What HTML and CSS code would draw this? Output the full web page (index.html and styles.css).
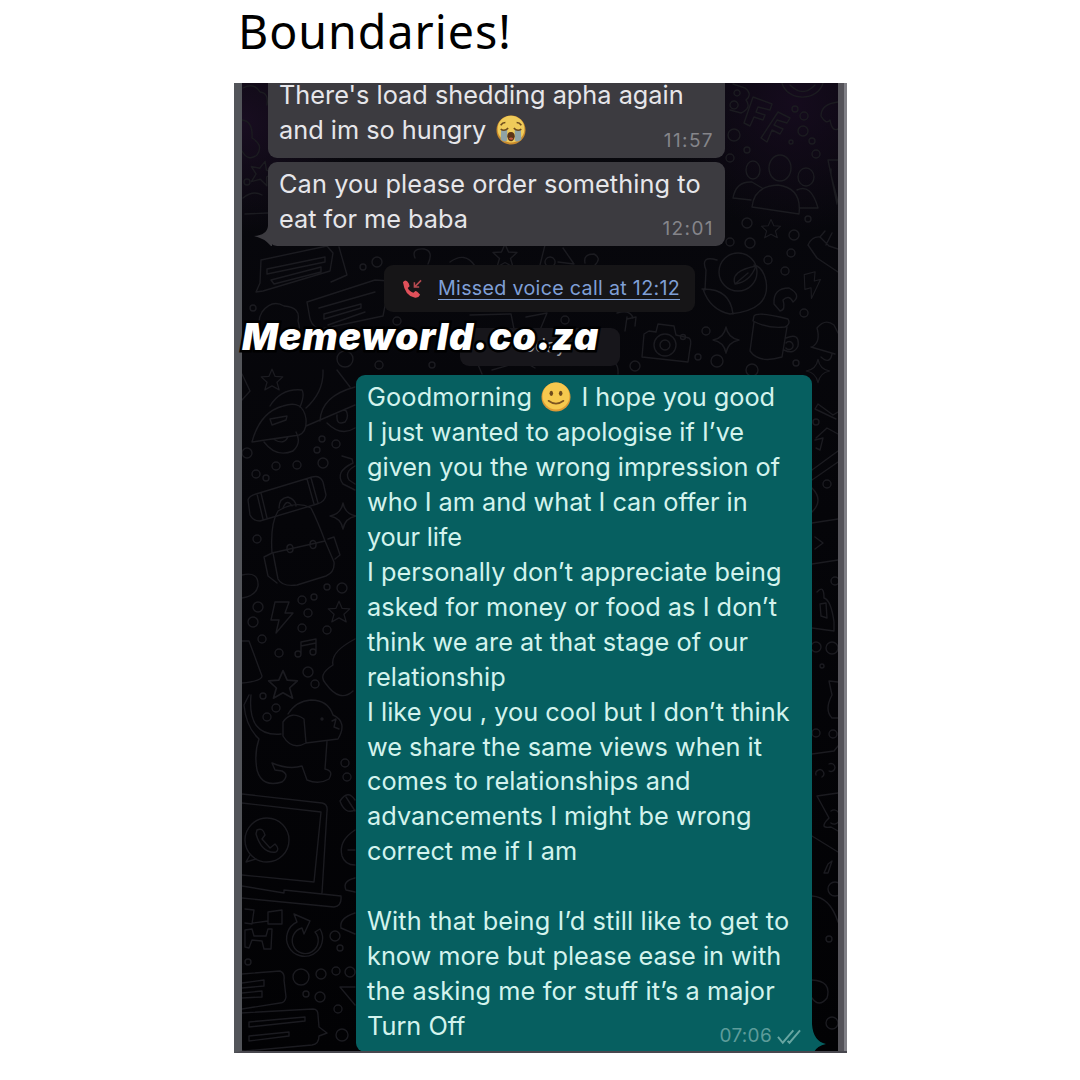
FILE: index.html
```html
<!DOCTYPE html>
<html lang="en">
<head>
<meta charset="utf-8">
<title>Boundaries!</title>
<link rel="stylesheet" href="styles.css">
</head>
<body>
<h1 class="title">Boundaries!</h1>
<main class="photo">
  <svg class="wallpaper" viewBox="234 83 613 970" aria-hidden="true">
    <defs>
      <path id="star" d="M0-12 3.500-4 12-3.500 5.500 2.500 8 11 0 6.500-8 11-5.500 2.500-12-3.500-3.500-4Z"/>
      <path id="spark" d="M0-13Q2-2 13 0Q2 2 0 13Q-2 2-13 0Q-2-2 0-13Z"/>
      <path id="bolt" d="M-6-15H8L4-4H12L-5 16-2 3H-10Z"/>
      <path id="note" d="M-5 7V-5L10-8V5M-5-1 10-4M-5 7A3 3 0 1 1-8 4Q-5 4-5 7M10 5A3 3 0 1 1 7 2Q10 2 10 5"/>
      <path id="chat" d="M-38-16 34-20Q39-20 39-14L40-2 48 4 40 7Q40 15 33 16L-34 22Q-40 22-40 15L-42-10Q-42-16-38-16ZM-30-7 26-12V-8L-30-2ZM-30 7 10 3V7L-30 12Z"/>
    </defs>
    <g class="doodle">
      <!-- right of the grey bubbles -->
      <path d="M733 84 745 88Q753 94 746 100 752 108 741 113L730 110M737 90a3 3 0 1 0 .1 0M734 101a4 4 0 1 0 .1 0M753 97 772 104 770 110 758 107 756 112 765 115 763 120 754 117 750 126 744 123ZM778 112 790 118 787 123 777 120 774 125 783 129 780 134 772 130 767 142 761 138Z"/>
      <path d="M782 83A21 18 0 0 0 823 83M790 85Q803 98 815 85M838 102Q821 104 821 116 826 125 830 120 832 132 838 129"/>
      <ellipse cx="780" cy="168" rx="11" ry="13"/><ellipse cx="753" cy="170" rx="7" ry="9"/><ellipse cx="806" cy="177" rx="8" ry="9"/>
      <path d="M752 207Q754 186 778 185 802 188 799 214ZM733 198Q736 181 752 182L762 188M733 198 751 200M797 190Q811 183 818 208L800 208"/>
      <path d="M838 160H828L837 204M831 169V175L838 202"/>
      <use href="#star" transform="translate(771 229) scale(.8)"/>
      <path d="M808 245Q812 236 820 237L829 246 838 249M808 245 817 258 838 272M820 237 825 231M826 245 832 233"/>
      <circle cx="738" cy="272" r="19"/>
      <path d="M717 260Q700 255 706 270L705 290M703 289Q710 310 730 314 771 310 766 281 763 267 754 265M702 289Q730 288 733 314M735 284Q730 271 756 266 750 282 735 284L748 273"/>
      <path d="M774 304Q773 288 789 288 802 295 793 302 789 294 783 300 786 310 780 311Z"/>
      <use href="#bolt" transform="translate(812 285) rotate(-15) scale(.8)"/>
      <path d="M754 316Q757 311 788 319 791 324 785 327 768 329 753 321ZM754 322 750 351Q759 364 782 357L787 327M786 338Q800 332 798 346 794 355 784 350M786 343a4 4 0 1 1-.1 5"/>
      <path d="M812 347Q821 342 817 328 825 318 834 325L838 333M811 347 835 354M821 357Q830 365 832 354"/>
      <path d="M649 331 656 332 658 324 674 326 676 335 689 338Q692 340 690 348L688 362 642 357 644 334Z"/>
      <circle cx="665" cy="345" r="11"/><circle cx="665" cy="345" r="5"/><circle cx="683" cy="337" r="2.500"/>
      <use href="#spark" transform="translate(726 340)"/><use href="#spark" transform="translate(818 371) scale(.9)"/>
      <!-- right edge -->
      <path d="M838 412 833 415 818 404 815 409 836 419M815 440 823 438 820 450 816 448M816 438 827 428 838 434M812 480 838 462M812 470 838 451M812 523 838 519M815 537 823 543 815 549M812 564 838 560M817 592Q824 584 824 598 831 600 834 622V631L812 628M820 604 826 603 827 618 821 616ZM812 488Q824 500 812 512M838 682 829 681 832 695Q824 710 832 718H838M812 754 834 751 838 746M816 775a4 4 0 1 1 6 2M829 764a4 4 0 1 1 .1 7M838 793 817 796 829 818Q818 829 831 827L838 831M831 811a6 7 0 1 1-.1 12M812 836 838 852M828 864 832 861 828 873 824 873ZM812 896Q830 897 838 922M812 980Q832 981 827 998 819 1008 812 998"/>
      <!-- upper left and behind the call notice -->
      <path d="M243 88Q254 82 260 92 269 93 267 105M242 120Q253 121 252 138 264 145 257 155 248 162 242 151M245 214 268 213M243 198Q253 190 262 195"/>
      <use href="#star" transform="translate(262 173) rotate(15)"/>
      <path d="M261 260 327 246 333 253 330 271 263 291 256 292 260 283ZM267 269 325 257V262L267 274ZM271 280 321 267V272L274 284ZM339 247 347 275 331 282"/>
      <path d="M307 302 375 280 390 281 383 316 326 328Q314 331 310 319ZM319 308 375 292M324 314 361 304V308L324 319ZM328 325 365 312"/>
      <path d="M262 312Q272 299 284 306 301 307 298 321 303 336 291 343L267 340Q254 325 262 312Z"/>
      <path d="M415 258Q411 248 424 249 434 251 428 264M450 262Q465 251 475 266M545 245 540 265M563 248 574 264 558 262M550 257a5 5 0 1 0 .1 0M585 263Q583 254 594 254 602 258 595 265"/>
      <use href="#star" transform="translate(505 256)"/>
      <path d="M470 315 511 314 514 329M526 317 547 313 540 330M627 317 625 331M627 319 636 317 635 326M476 360 482 374M497 347 535 368M492 370 527 360M605 365Q619 358 618 374M617 313Q630 309 633 318"/>
      <!-- left column -->
      <use href="#star" transform="translate(272 380) scale(.9)"/>
      <path d="M242 374 250 391 242 400M252 442Q260 412 283 406 303 399 306 419 307 432 299 435 280 438 252 442ZM270 406Q281 388 302 390 305 395 300 407M270 419 287 416 286 420 272 425ZM264 442Q276 458 293 451 302 443 296 432M275 440Q284 445 288 437M306 426 355 405M320 421Q321 396 355 387M327 423Q341 437 355 428M337 415Q336 426 345 422 350 416 345 409M323 370Q324 392 306 408M337 370 350 387"/>
      <path d="M342 456 352 459 353 463Q334 472 343 484L355 490M355 466Q344 472 349 480L355 484"/>
      <path d="M248 500Q249 496 256 494L312 477Q320 475 323 482L326 495Q325 502 317 504L260 521Q253 521 250 515ZM257 494 263 519M261 493 267 518M307 479 314 504M311 478 318 503M279 508Q279 498 288 497 296 500 296 506M283 508Q287 498 292 506"/>
      <path d="M272 553Q270 524 278 511 296 500 311 508 318 522 325 541Q299 547 272 553ZM273 553 278 579Q282 587 297 585L326 576Q335 572 334 562L325 541M272 553 264 557 268 576 277 583M328 539 334 537 340 555 335 559M287 549a3 4 0 1 0 6-1a3 4 0 1 0-6 1M310 545a3 4 0 1 0 6-1a3 4 0 1 0-6 1"/>
      <use href="#spark" transform="translate(343 516)"/>
      <path d="M242 575Q259 571 258 586 256 596 242 598"/>
      <use href="#bolt" transform="translate(281 617)"/><use href="#star" transform="translate(339 612) scale(.9)"/><use href="#note" transform="translate(306 647)"/>
      <path d="M242 641H249L262 676Q262 681 242 683M355 639Q330 652 333 665 317 675 326 684 340 703 353 691"/>
      <use href="#star" transform="translate(283 685) scale(1.200)"/>
      <path d="M251 695Q247 737 281 734M249 695 244 705Q246 727 259 739 254 753 257 770 262 788 282 782 290 775 282 771L275 770 272 763Q289 770 302 766L307 780Q319 785 329 779 334 771 325 769L327 741M288 714Q296 701 311 700 328 700 333 715 348 722 338 739L306 743M283 722Q291 710 304 719L306 743Q292 751 283 736Z"/>
      <circle cx="322" cy="719" r="1"/><path d="M332 721 336 719 334 727 339 729"/>
      <path d="M242 794 322 803Q328 804 327 811L322 893M242 803 321 812 314 882 242 875M242 886 284 893V890L341 896Q342 906 334 907L242 898"/>
      <circle cx="267" cy="840" r="22"/><path d="M250 855 246 862 256 859M257 830Q263 827 265 835L262 839 270 848 275 844Q280 849 276 852 262 854 256 834Z"/>
      <path d="M340 801Q348 789 355 800M340 801Q345 815 355 810M346 797 355 811M355 830Q338 841 342 856 345 865 355 865M348 850H355M355 878Q342 881 346 890L355 892M355 913Q339 918 341 928L355 934"/>
      <path d="M245 909 254 910 252 924 245 923M268 912 282 910 282 924 268 924ZM253 923 268 921M245 930 252 929 254 936H266L268 929 272 929 271 949 264 949 262 941 252 940 249 948 245 947Z"/>
      <path d="M320 929A18 18 0 1 1 297 922L294 914 310 921 304 934 302 928A13 13 0 1 0 315 932Z"/>
      <path d="M242 974 280 971Q285 973 284 980L286 997Q285 1003 280 1003L242 1009M242 983 264 980V986L242 988M242 993 262 991V997L242 998M340 987 355 1005M340 987H355"/>
      <use href="#chat" transform="translate(279 1029)"/>
      <g>
        <circle cx="734" cy="135" r="6"/><circle cx="803" cy="131" r="5"/><circle cx="804" cy="116" r="4"/><circle cx="795" cy="109" r="3"/><circle cx="812" cy="141" r="3"/><circle cx="816" cy="154" r="4"/><circle cx="791" cy="142" r="2"/><circle cx="747" cy="150" r="3"/><circle cx="730" cy="158" r="4"/><circle cx="747" cy="223" r="5"/><circle cx="794" cy="235" r="5"/><circle cx="808" cy="219" r="3"/><circle cx="750" cy="243" r="5"/><circle cx="730" cy="242" r="4"/><circle cx="791" cy="253" r="4"/><circle cx="768" cy="260" r="4"/><circle cx="785" cy="271" r="4"/><circle cx="804" cy="313" r="4"/><circle cx="706" cy="331" r="4"/><circle cx="698" cy="357" r="3"/><circle cx="717" cy="361" r="6"/><circle cx="635" cy="366" r="5"/><circle cx="752" cy="370" r="6"/><circle cx="796" cy="363" r="3"/><circle cx="565" cy="320" r="4"/>
        <circle cx="247" cy="182" r="3"/><circle cx="377" cy="262" r="5"/><circle cx="363" cy="267" r="3"/><circle cx="253" cy="308" r="3"/><circle cx="397" cy="321" r="4"/><circle cx="345" cy="359" r="8"/><circle cx="379" cy="365" r="4"/><circle cx="432" cy="365" r="3"/>
        <circle cx="322" cy="439" r="3"/><circle cx="336" cy="444" r="4"/><circle cx="317" cy="450" r="3"/><circle cx="247" cy="453" r="5"/><circle cx="276" cy="466" r="4"/><circle cx="297" cy="465" r="4"/><circle cx="323" cy="463" r="5"/><circle cx="256" cy="474" r="4"/><circle cx="266" cy="478" r="3"/><circle cx="257" cy="539" r="4"/><circle cx="342" cy="588" r="5"/><circle cx="327" cy="587" r="3"/><circle cx="314" cy="597" r="3"/><circle cx="302" cy="600" r="4"/><circle cx="258" cy="607" r="5"/><circle cx="253" cy="622" r="5"/><circle cx="308" cy="613" r="4"/><circle cx="302" cy="628" r="4"/><circle cx="327" cy="630" r="4"/><circle cx="262" cy="639" r="4"/><circle cx="279" cy="653" r="4"/><circle cx="308" cy="672" r="5"/><circle cx="315" cy="684" r="4"/><circle cx="263" cy="696" r="3"/><circle cx="276" cy="708" r="4"/><circle cx="267" cy="717" r="4"/><circle cx="345" cy="763" r="4"/><circle cx="347" cy="777" r="4"/>
        <circle cx="335" cy="936" r="5"/><circle cx="340" cy="948" r="3"/><circle cx="248" cy="962" r="3"/><circle cx="301" cy="977" r="8"/><circle cx="321" cy="974" r="5"/><circle cx="336" cy="971" r="4"/><circle cx="350" cy="972" r="5"/><circle cx="306" cy="994" r="3"/><circle cx="320" cy="997" r="5"/><circle cx="338" cy="1009" r="4"/><circle cx="342" cy="1035" r="6"/>
        <circle cx="827" cy="484" r="4"/><circle cx="816" cy="422" r="3"/><circle cx="835" cy="581" r="4"/><circle cx="816" cy="647" r="5"/><circle cx="832" cy="648" r="6"/><circle cx="822" cy="666" r="2"/><circle cx="816" cy="733" r="4"/><circle cx="833" cy="734" r="4"/><circle cx="835" cy="889" r="7"/><circle cx="829" cy="939" r="3"/><circle cx="832" cy="1023" r="6"/>
      </g>
    </g>
  </svg>

  <section class="chat">
    <div class="bubble received first">
      <p>There's load shedding apha again</p>
      <p>and im so hungry <svg class="emoji" viewBox="0 0 32 32" role="img" aria-label="crying"><circle cx="16" cy="16" r="15.500" fill="#c98a2c"/><circle cx="16" cy="15" r="14.300" fill="#efcb5a"/><path d="M5.500 16H12V27Q9 30 5 26ZM20 16H26.500L27 26Q23 30 20 27Z" fill="#8fa3a6"/><path d="M5 11Q7 8 10 8M27 11Q25 8 22 8M5 15Q9 18 13 14M27 15Q23 18 19 14" fill="none" stroke="#6b4a1e" stroke-width="1.700"/><path d="M16 18Q20 18 20 23 19 28 16 28 13 28 12 23 12 18 16 18Z" fill="#5b3417"/><path d="M13.500 25Q16 23 18.500 25 17 28 13.500 25" fill="#c65b45"/></svg></p>
      <time>11:57</time>
    </div>
    <div class="bubble received second">
      <p class="loose">Can you please order something to</p>
      <p>eat for me baba</p>
      <time>12:01</time>
      <svg class="tail-left" viewBox="0 0 18 20"><path d="M18 0H14Q13 9 0 10Q10 12 17 20H18Z"/></svg>
    </div>
    <div class="call">
      <svg class="phone" viewBox="0 0 22 20"><path d="M1 3Q4-1 7 4L8 7 6 9Q8 13 12 14L14 12Q16 12 19 16 17 20 13 19 3 17 1 3Z" fill="#e0505a"/><path d="M20 1 13 8M13 3V8H18" fill="none" stroke="#b64a50" stroke-width="1.600"/></svg>
      <a class="call-text">Missed voice call at 12:12</a>
    </div>
    <div class="day">Today</div>
    <div class="bubble sent">
      <p><span class="wide">Goodmorning</span> <svg class="emoji smile" viewBox="0 0 32 32" role="img" aria-label="smiling"><circle cx="16" cy="16" r="15.500" fill="#dc9a35"/><circle cx="16" cy="15" r="14.400" fill="#f6c94e"/><ellipse cx="11" cy="12" rx="1.900" ry="2.800" fill="#6e4a1c"/><ellipse cx="21" cy="12" rx="1.900" ry="2.800" fill="#6e4a1c"/><path d="M8 20Q16 26 24 20" fill="none" stroke="#7c5420" stroke-width="1.700" stroke-linecap="round"/></svg> I hope you good</p>
      <p>I just wanted to apologise if I’ve</p>
      <p>given you the wrong impression of</p>
      <p class="tight">who I am and what I can offer in</p>
      <p class="tighter">your life</p>
      <p class="open">I personally don’t appreciate being</p>
      <p class="open">asked for money or food as I don’t</p>
      <p class="open">think we are at that stage of our</p>
      <p>relationship</p>
      <p class="open">I like you , you cool but I don’t think</p>
      <p>we share the same views when it</p>
      <p class="loose">comes to relationships and</p>
      <p class="open">advancements I might be wrong</p>
      <p>correct me if I am</p>
      <p>&nbsp;</p>
      <p class="wide">With that being I’d still like to get to</p>
      <p>know more but please ease in with</p>
      <p class="loose">the asking me for stuff it’s a major</p>
      <p>Turn Off</p>
      <div class="status"><time>07:06</time><svg class="ticks" viewBox="0 0 25 17"><path d="M1 9 6 15 17 2M11 13 13 15 24 2"/></svg></div>
      <svg class="tail-right" viewBox="0 0 18 28"><path d="M0 0H4Q5 17 18 20Q9 22 6 28H0Z"/></svg>
    </div>
  </section>
  <div class="watermark">Memeworld.co.za</div>
</main>
</body>
</html>
```

FILE: styles.css
```css
* { box-sizing: border-box; }
body { margin: 0; width: 1080px; height: 1080px; overflow: hidden; background: #fff; display: flex; flex-direction: column; }
p, h1 { margin: 0; font-weight: 400; }
.title { height: 83px; padding-left: 238px; font: 400 46.5px/63px "Noto Sans", sans-serif; letter-spacing: 1px; color: #000; }
.photo {
  position: relative; width: 613px; height: 970px; margin-left: 234px; overflow: hidden;
  background: radial-gradient(circle at 560px 20px, #150b1d 0, transparent 130px), radial-gradient(circle at 10px 40px, #180d20 0, transparent 110px), linear-gradient(#08080d, #050509 45%, #020204);
  font-family: Inter, "Liberation Sans", sans-serif;
}
.photo::after {
  content: ""; position: absolute; inset: 0;
  border-left: 8px solid #53555a; border-bottom: 2px solid #48474e;
  background: linear-gradient(90deg, transparent 596px, #545359 596px, #545359 602px, #808086 602px);
}
.wallpaper { position: absolute; inset: 0; width: 613px; height: 970px; }
.doodle { fill: none; stroke: #1b1b20; stroke-width: 1.4; stroke-linejoin: round; stroke-linecap: round; }
.chat { position: relative; display: flex; flex-direction: column; height: 970px; }
.bubble { position: relative; font-size: 25.3px; line-height: 34.95px; white-space: nowrap; }
.tight { letter-spacing: -.04px; }
.tighter { letter-spacing: -.15px; }
.open { letter-spacing: .04px; }
.loose { letter-spacing: .1px; }
.wide { letter-spacing: .15px; }
.received { width: 457px; margin-left: 34px; padding-left: 11px; background: #3c3b40; color: #e6e6ea; border-radius: 9px; }
.first { height: 75px; border-radius: 0 0 9px 9px; }
.first p { margin-top: -5px; }
.first p + p { margin-top: 0; }
.second { height: 84px; margin-top: 4px; padding-top: 5px; }
.received time { position: absolute; right: 11px; bottom: 3px; font-size: 19px; line-height: 28px; letter-spacing: 1.4px; color: #85858a; }
.emoji { width: 30px; height: 30px; vertical-align: -6px; margin: -4px 0 0 3px; }
.tail-left { position: absolute; left: -14px; bottom: 0; width: 18px; height: 20px; fill: #3c3b40; }
.call { display: flex; align-items: center; width: 311px; height: 47px; margin: 19px 0 0 150px; padding-left: 18px; background: #161517; border-radius: 9px; }
.phone { width: 21px; height: 20px; margin-right: 15px; }
.call-text { font-size: 19.7px; line-height: 22px; letter-spacing: .3px; color: #7f9fd6; white-space: nowrap; border-bottom: 1.5px solid #7f9fd6; }
.day { width: 160px; height: 38px; margin: 16px 0 0 226px; background: #17161b; border-radius: 9px; text-align: center; font-size: 18px; line-height: 36px; color: #9b9ba0; }
.sent { width: 456px; height: 677px; margin: 9px 0 0 122px; padding: 5px 0 0 11px; background: #065f60; color: #d3f3ed; border-radius: 9px 9px 2px 9px; }
.smile { margin: -4px 3px 0 2px; }
.status { position: absolute; right: 11px; bottom: 3px; display: flex; align-items: center; gap: 5px; font-size: 19px; line-height: 26px; letter-spacing: .3px; color: #5d9c9a; }
.ticks { width: 24px; height: 17px; fill: none; stroke: #68a6a2; stroke-width: 2; }
.tail-right { position: absolute; right: -14px; bottom: 0; width: 18px; height: 28px; fill: #065f60; }
.watermark {
  position: absolute; left: 8px; top: 232px; z-index: 2;
  font: italic 900 37.5px/44px Inter, sans-serif; letter-spacing: .9px; color: #fff; white-space: nowrap;
  -webkit-text-stroke: 5px #000; paint-order: stroke fill;
}
```
